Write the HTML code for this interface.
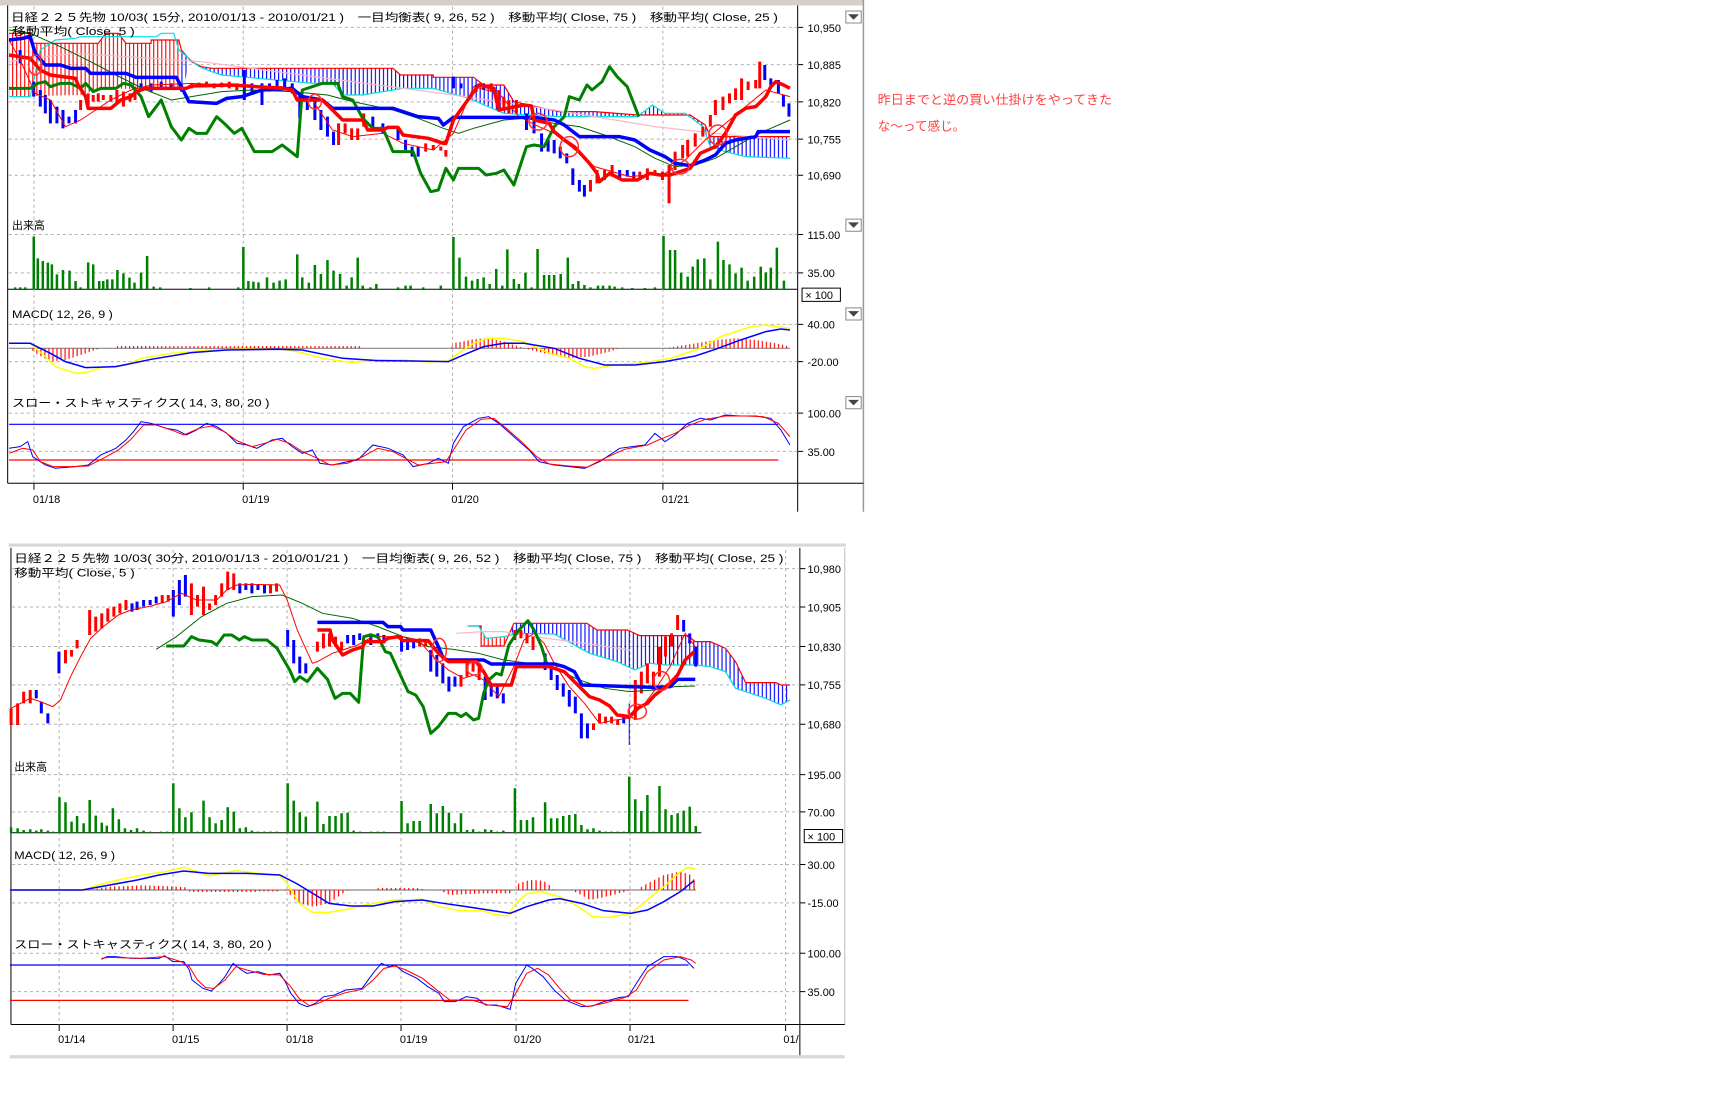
<!DOCTYPE html>
<html><head><meta charset="utf-8"><style>
html,body{margin:0;padding:0;background:#fff;}
svg{display:block;}
text{font-family:"Liberation Sans","Noto Sans CJK JP",sans-serif;font-size:10px;fill:#000;}
.ns{vector-effect:non-scaling-stroke;fill:none;}
</style></head><body>
<svg width="1718" height="1106" viewBox="0 0 1718 1106" xmlns="http://www.w3.org/2000/svg">
<defs>
<pattern id="hr" patternUnits="userSpaceOnUse" width="8" height="4000"><rect x="0" y="0" width="2.2" height="4000" fill="#ff0000"/></pattern>
<pattern id="hb" patternUnits="userSpaceOnUse" width="8" height="4000"><rect x="0" y="0" width="2.2" height="4000" fill="#0000ff"/></pattern>
</defs>
<rect width="1718" height="1106" fill="#fff"/>
<g transform="scale(1.0957)">
<rect x="0" y="0" width="788" height="5" fill="#d4d0c8"/>
<line x1="7" y1="5" x2="7" y2="441" stroke="#000" class="ns"/>
<line x1="728" y1="5" x2="728" y2="467" stroke="#000" class="ns"/>
<line x1="788" y1="0" x2="788" y2="467" stroke="#999" stroke-width="1.5" class="ns"/>
<line x1="7" y1="441" x2="788" y2="441" stroke="#000" class="ns"/>
<line x1="7" y1="264" x2="728" y2="264" stroke="#000" class="ns"/>
<g stroke="#b0b0b0" stroke-dasharray="3,3" class="ns">
<path class="ns" d="M8 25H728M8 59H728M8 93H728M8 127H728M8 160H728M8 214H728M8 249H728M8 296H728M8 330H728M8 377H728M8 412H728"/>
<path class="ns" d="M31 6V441M222 6V441M413 6V441M605 6V441"/>
</g>
<path class="ns" stroke="#000" d="M728 25H733M728 59H733M728 93H733M728 127H733M728 160H733M728 214H733M728 249H733M728 296H733M728 330H733M728 377H733M728 412H733M31 441V447M222 441V447M413 441V447M605 441V447"/>
<g>
<text x="737" y="29">10,950</text><text x="737" y="63">10,885</text><text x="737" y="97">10,820</text><text x="737" y="131">10,755</text><text x="737" y="164">10,690</text>
<text x="737" y="218">115.00</text><text x="737" y="253">35.00</text>
<text x="737" y="300">40.00</text><text x="737" y="334">-20.00</text>
<text x="737" y="381">100.00</text><text x="737" y="416">35.00</text>
<text x="30" y="459">01/18</text><text x="221" y="459">01/19</text><text x="412" y="459">01/20</text><text x="604" y="459">01/21</text>
</g>
<rect x="732" y="263" width="35" height="12" fill="none" stroke="#000" class="ns"/>
<text x="735" y="273">× 100</text>
<g fill="#fff" stroke="#888">
<rect x="772" y="10" width="14" height="11" class="ns" style="fill:#fff"/><rect x="772" y="200" width="14" height="11" class="ns" style="fill:#fff"/><rect x="772" y="281" width="14" height="11" class="ns" style="fill:#fff"/><rect x="772" y="362" width="14" height="11" class="ns" style="fill:#fff"/>
</g>
<path fill="#444" d="M774 13h10l-5 5zM774 203h10l-5 5zM774 284h10l-5 5zM774 365h10l-5 5z"/>

<g transform="scale(0.4598,0.3042)">
<clipPath id="c1r"><rect x="15" y="0" width="345" height="700"/></clipPath>
<clipPath id="c1b"><rect x="360" y="0" width="1220" height="700"/></clipPath>
<path fill="url(#hr)" clip-path="url(#c1r)" d="M18 100L60 100L65 130L195 130L210 100L235 100L250 130L300 130L300 120L355 120L360 150L380 185L400 200L420 205L780 205L795 225L860 225L860 232L940 232L960 255L1000 255L1020 305L1110 335L1180 335L1265 345L1370 345L1400 375L1410 410L1568 410L1568 475L1480 470L1440 455L1410 440L1395 380L1360 340L1320 340L1295 315L1265 350L1110 350L1000 340L930 295L860 265L800 265L780 270L720 285L680 285L660 250L620 250L440 225L420 215L395 200L375 175L365 270L200 265L160 285L18 290Z"/>
<path fill="url(#hb)" clip-path="url(#c1b)" d="M18 100L60 100L65 130L195 130L210 100L235 100L250 130L300 130L300 120L355 120L360 150L380 185L400 200L420 205L780 205L795 225L860 225L860 232L940 232L960 255L1000 255L1020 305L1110 335L1180 335L1265 345L1370 345L1400 375L1410 410L1568 410L1568 475L1480 470L1440 455L1410 440L1395 380L1360 340L1320 340L1295 315L1265 350L1110 350L1000 340L930 295L860 265L800 265L780 270L720 285L680 285L660 250L620 250L440 225L420 215L395 200L375 175L365 270L200 265L160 285L18 290Z"/>
<polyline class="ns" stroke="#ff0000" stroke-width="1.2" points="18,100 60,100 65,130 195,130 210,100 235,100 250,130 300,130 300,120 355,120 360,150 380,185 400,200 420,205 780,205 795,225 860,225 860,232 940,232 960,255 1000,255 1020,305 1110,335 1180,335 1265,345 1370,345 1400,375 1410,410 1568,410"/>
<polyline class="ns" stroke="#00e0e0" stroke-width="1.2" points="18,290 60,290 80,150 110,120 150,115 160,110 310,110 320,100 345,100 355,150 375,175 395,200 420,215 440,225 620,250 660,250 680,285 720,285 780,270 800,265 860,265 930,295 1000,340 1110,350 1180,350 1265,350 1295,315 1320,340 1360,340 1395,380 1410,440 1440,455 1480,470 1568,475"/>
<polyline class="ns" stroke="#f8b8c8" stroke-width="1.2" points="18,185 60,175 150,160 250,170 400,185 500,205 700,245 900,285 1100,330 1300,380 1450,405 1568,420"/>
<path class="ns" stroke="#0000ff" stroke-width="3" d="M40 150V190M67 245V290M80 270V320M90 285V340M100 300V370M113 320V370M125 330V385M137 350V370M150 330V370M280 250V270M300 250V275M320 245V265M340 250V270M360 250V275M485 210V300M500 250V285M520 250V315M535 250V275M550 240V265M565 235V265M580 250V280M595 280V355M610 290V330M625 300V360M637 330V390M650 350V410M662 395V435M740 350V390M760 370V400M790 385V420M805 420V450M818 440V470M830 440V470M900 230V265M915 250V265M945 255V275M960 250V270M1045 340V390M1060 350V400M1075 400V455M1088 420V455M1100 420V460M1112 440V475M1125 460V490M1137 505V555M1150 540V575M1160 555V590M1230 510V535M1245 510V530M1258 515V540M1518 195V240M1530 235V265M1545 240V280M1555 285V320M1566 310V350"/>
<path class="ns" stroke="#ff0000" stroke-width="3" d="M160 300V330M175 280V320M185 285V305M195 280V305M205 285V300M220 285V305M232 270V310M245 275V320M258 280V305M268 260V300M380 250V265M395 248V262M410 245V262M425 250V265M440 248V262M455 245V265M470 250V270M672 370V435M685 370V400M698 385V420M710 385V420M722 340V380M845 430V455M860 435V450M875 440V452M885 450V470M975 250V275M990 270V320M1000 290V330M1010 300V340M1025 300V340M1172 540V575M1185 510V550M1200 510V540M1215 495V530M1270 515V540M1285 505V540M1300 510V525M1315 515V540M1328 495V610M1340 455V510M1355 435V475M1365 420V470M1380 400V440M1395 380V410M1410 345V380M1420 300V345M1435 290V330M1448 280V310M1460 265V300M1472 235V300M1485 245V270M1500 240V265M1508 185V265"/>
<polyline class="ns" stroke="#006400" stroke-width="1" points="18,90 60,100 120,140 180,185 230,225 290,270 340,300 380,290 440,275 500,270 580,275 650,285 700,305 780,330 830,355 880,385 910,400 940,385 1000,360 1040,355 1100,370 1150,380 1200,405 1260,440 1300,475 1340,500 1380,495 1420,475 1460,440 1500,405 1530,385 1568,360"/>
<polyline class="ns" stroke="#ff0000" stroke-width="1" points="18,120 40,180 70,280 100,300 130,380 160,360 190,330 220,300 260,270 300,255 380,250 450,255 560,260 600,290 620,300 660,390 700,410 760,400 800,430 860,450 900,400 940,260 990,280 1030,350 1070,380 1100,400 1150,460 1180,500 1250,530 1320,520 1360,480 1400,420 1440,370 1480,320 1520,270 1568,290"/>
<polyline class="ns" stroke="#008000" stroke-width="3" stroke-linejoin="round" points="18,265 60,265 75,250 90,245 100,260 120,250 140,250 160,265 170,250 185,275 200,265 230,265 245,250 260,255 280,290 295,350 320,300 340,380 360,420 375,385 390,400 410,400 430,350 445,370 465,400 480,385 505,455 540,455 560,435 590,470 600,270 640,250 670,250 680,290 700,300 720,355 740,385 760,385 770,420 780,455 820,455 835,520 855,575 870,570 885,505 900,540 910,505 950,505 965,525 985,520 1000,510 1020,555 1045,440 1060,435 1080,440 1100,380 1120,350 1130,290 1150,300 1165,255 1175,270 1195,245 1210,200 1225,230 1245,260 1268,350"/>
<polyline class="ns" stroke="#0000ff" stroke-width="3.5" stroke-linejoin="round" points="18,120 45,115 60,110 70,160 90,195 120,195 140,205 170,205 180,220 250,220 270,232 350,232 360,260 375,305 430,310 450,295 480,290 520,270 580,265 600,290 640,300 660,325 780,325 790,330 830,350 870,355 880,375 900,352 1000,352 1060,352 1100,360 1120,375 1150,410 1230,410 1260,420 1290,450 1320,470 1340,490 1370,497 1400,480 1420,465 1440,430 1460,420 1500,410 1505,395 1568,395"/>
<polyline class="ns" stroke="#ff0000" stroke-width="3.5" stroke-linejoin="round" points="18,165 60,175 80,210 100,225 150,235 155,255 170,290 175,325 220,325 240,300 260,290 270,275 290,265 320,265 350,265 370,265 380,258 460,255 560,265 580,270 590,300 640,300 680,360 720,360 730,390 760,390 770,382 790,382 800,405 850,415 880,430 885,430 900,360 950,255 980,265 990,330 1040,315 1055,318 1060,360 1090,370 1100,395 1120,420 1140,440 1170,490 1185,520 1190,545 1210,520 1235,540 1265,540 1290,520 1310,525 1330,525 1340,520 1370,505 1390,460 1420,440 1440,400 1460,345 1480,325 1500,320 1520,290 1530,260 1540,245 1555,255 1568,265"/>
<g class="ns" stroke="#ff3030" stroke-width="1.5">
<ellipse class="ns" cx="70" cy="195" rx="13" ry="30"/><ellipse class="ns" cx="625" cy="305" rx="13" ry="22"/><ellipse class="ns" cx="1068" cy="365" rx="18" ry="25"/><ellipse class="ns" cx="1130" cy="440" rx="18" ry="30"/><ellipse class="ns" cx="1350" cy="500" rx="18" ry="22"/><ellipse class="ns" cx="1425" cy="405" rx="18" ry="30"/>
</g>
<path class="ns" stroke="#008000" stroke-width="2.5" d="M30 867V862M40 867V862M50 867V862M67 867V710M75 867V775M85 867V783M95 867V788M103 867V793M113 867V823M125 867V810M138 867V812M150 867V843M160 867V862M175 867V787M185 867V793M197 867V843M205 867V843M213 867V838M223 867V838M233 867V810M245 867V820M257 867V833M267 867V848M280 867V818M292 867V768M305 867V860M318 867V862M378 867V864M415 867V862M473 867V862M483 867V741M493 867V843M503 867V845M513 867V847M530 867V832M543 867V848M555 867V842M567 867V838M590 867V763M600 867V832M613 867V848M625 867V795M637 867V822M650 867V780M662 867V812M675 867V822M688 867V857M698 867V832M710 867V773M720 867V857M735 867V862M747 867V852M790 867V862M805 867V857M815 867V857M840 867V862M875 867V857M900 867V711M912 867V773M925 867V830M937 867V842M948 867V837M960 867V832M972 867V852M985 867V807M997 867V857M1007 867V748M1020 867V837M1030 867V852M1043 867V818M1055 867V862M1067 867V747M1080 867V825M1090 867V825M1100 867V825M1113 867V822M1127 867V773M1137 867V852M1148 867V843M1160 867V855M1172 867V862M1187 867V857M1197 867V857M1210 867V857M1220 867V860M1235 867V862M1255 867V864M1280 867V864M1300 867V862M1317 867V708M1330 867V750M1340 867V750M1352 867V818M1365 867V830M1375 867V800M1385 867V778M1398 867V775M1410 867V838M1425 867V725M1436 867V780M1448 867V793M1460 867V820M1472 867V803M1484 867V842M1497 867V830M1510 867V800M1520 867V817M1530 867V803M1542 867V743M1556 867V842"/>
<line class="ns" x1="18" y1="1045" x2="1568" y2="1045" stroke="#888" stroke-width="1.2"/>
<path fill="url(#hr)" d="M60 1045L70 1060L100 1085L130 1080L160 1065L190 1050L200 1045ZM230 1045L720 1045L720 1038L230 1038ZM895 1045L900 1030L940 1018L970 1015L1000 1025L1030 1040L1040 1045ZM1040 1045L1080 1060L1130 1075L1170 1070L1210 1055L1230 1045ZM1320 1045L1360 1035L1420 1020L1460 1015L1500 1020L1540 1030L1568 1040L1568 1045Z"/>
<polyline class="ns" stroke="#ffff00" stroke-width="1.5" points="18,1030 60,1030 90,1070 110,1100 150,1120 170,1118 200,1103 250,1095 280,1075 340,1060 420,1050 480,1048 560,1048 590,1055 640,1075 700,1088 750,1080 800,1080 850,1086 890,1083 910,1060 940,1030 970,1015 1000,1015 1040,1025 1090,1060 1130,1075 1160,1100 1180,1105 1220,1095 1280,1088 1330,1075 1390,1045 1430,1010 1490,980 1520,975 1568,985"/>
<polyline class="ns" stroke="#0000ff" stroke-width="1.5" points="18,1030 60,1030 100,1060 130,1085 170,1103 230,1100 300,1078 380,1058 450,1050 550,1048 600,1050 680,1075 750,1082 820,1083 890,1085 920,1065 960,1040 1000,1030 1040,1030 1100,1045 1150,1075 1200,1095 1260,1095 1320,1085 1380,1068 1420,1048 1470,1020 1520,995 1550,987 1568,990"/>
<line class="ns" x1="18" y1="1273" x2="1545" y2="1273" stroke="#0000ff" stroke-width="1.2"/>
<line class="ns" x1="18" y1="1380" x2="1545" y2="1380" stroke="#ff0000" stroke-width="1.2"/>
<polyline class="ns" stroke="#0000ff" stroke-width="1" points="18,1345 40,1340 55,1325 65,1370 90,1395 110,1405 150,1400 175,1395 200,1365 230,1345 250,1320 265,1295 280,1265 300,1270 330,1285 350,1290 370,1305 390,1290 410,1270 430,1280 450,1300 470,1330 490,1335 510,1345 540,1320 560,1315 580,1340 600,1360 620,1350 635,1390 660,1395 690,1385 710,1380 740,1335 770,1345 800,1365 820,1400 850,1390 870,1375 890,1390 900,1330 920,1280 950,1255 970,1250 990,1270 1020,1310 1050,1350 1070,1385 1100,1395 1130,1400 1160,1405 1190,1385 1230,1345 1280,1335 1300,1300 1320,1325 1340,1305 1365,1270 1390,1255 1410,1260 1440,1245 1470,1248 1500,1248 1530,1255 1550,1290 1568,1335"/>
<polyline class="ns" stroke="#ff0000" stroke-width="1" points="18,1360 45,1345 65,1350 80,1385 105,1400 140,1400 175,1398 205,1375 235,1350 260,1318 285,1275 310,1275 340,1290 365,1305 395,1285 420,1278 445,1295 470,1322 500,1340 525,1330 550,1318 575,1330 600,1355 630,1375 655,1395 690,1390 720,1370 750,1345 780,1355 805,1375 830,1395 860,1390 885,1385 900,1350 925,1290 955,1258 980,1255 1005,1285 1035,1325 1065,1370 1090,1392 1130,1398 1165,1402 1200,1375 1240,1348 1285,1335 1310,1318 1340,1300 1370,1275 1400,1258 1440,1248 1480,1248 1515,1250 1545,1270 1568,1310"/>
</g>
<text x="10" y="19" textLength="700" lengthAdjust="spacingAndGlyphs">日経２２５先物 10/03( 15分, 2010/01/13 - 2010/01/21 )　一目均衡表( 9, 26, 52 )　移動平均( Close, 75 )　移動平均( Close, 25 )</text>
<text x="11" y="32" textLength="112" lengthAdjust="spacingAndGlyphs">移動平均( Close, 5 )</text>
<text x="11" y="209">出来高</text>
<text x="11" y="290" textLength="92" lengthAdjust="spacingAndGlyphs">MACD( 12, 26, 9 )</text>
<text x="11" y="371" textLength="235" lengthAdjust="spacingAndGlyphs">スロー・ストキャスティクス( 14, 3, 80, 20 )</text>

<text x="801" y="95" style="fill:#ff4040;font-size:11.5px" textLength="214" lengthAdjust="spacingAndGlyphs">昨日までと逆の買い仕掛けをやってきた</text>
<text x="801" y="119" style="fill:#ff4040;font-size:11.5px" textLength="80" lengthAdjust="spacingAndGlyphs">な〜って感じ。</text>

<rect x="8" y="496" width="764" height="3" fill="#d8d8d8"/>
<line x1="10" y1="500" x2="10" y2="935" stroke="#000" class="ns"/>
<line x1="730" y1="500" x2="730" y2="965" stroke="#000" class="ns"/>
<line x1="771" y1="500" x2="771" y2="935" stroke="#bbb" class="ns"/>
<line x1="10" y1="935" x2="771" y2="935" stroke="#000" class="ns"/>
<line x1="10" y1="760" x2="640" y2="760" stroke="#000" class="ns"/>
<rect x="9" y="963" width="762" height="3" fill="#d8d8d8"/>
<g stroke="#b0b0b0" stroke-dasharray="3,3">
<path class="ns" d="M11 519H730M11 554H730M11 590H730M11 625H730M11 661H730M11 707H730M11 741H730M11 789H730M11 824H730M11 870H730M11 905H730"/>
<path class="ns" d="M54 502V935M158 502V935M262 502V935M366 502V935M471 502V935M575 502V935M717 502V935"/>
</g>
<path class="ns" stroke="#000" d="M730 519H735M730 554H735M730 590H735M730 625H735M730 661H735M730 707H735M730 741H735M730 789H735M730 824H735M730 870H735M730 905H735M54 935V941M158 935V941M262 935V941M366 935V941M471 935V941M575 935V941M717 935V941"/>
<text x="737" y="523">10,980</text><text x="737" y="558">10,905</text><text x="737" y="594">10,830</text><text x="737" y="629">10,755</text><text x="737" y="665">10,680</text>
<text x="737" y="711">195.00</text><text x="737" y="745">70.00</text>
<text x="737" y="793">30.00</text><text x="737" y="828">-15.00</text>
<text x="737" y="874">100.00</text><text x="737" y="909">35.00</text>
<rect x="734" y="757" width="35" height="12" fill="none" stroke="#000" class="ns"/>
<text x="737" y="767">× 100</text>
<text x="53" y="952">01/14</text><text x="157" y="952">01/15</text><text x="261" y="952">01/18</text><text x="365" y="952">01/19</text><text x="469" y="952">01/20</text><text x="573" y="952">01/21</text><text x="715" y="952">01/</text>
<text x="13" y="513" textLength="702" lengthAdjust="spacingAndGlyphs">日経２２５先物 10/03( 30分, 2010/01/13 - 2010/01/21 )　一目均衡表( 9, 26, 52 )　移動平均( Close, 75 )　移動平均( Close, 25 )</text>
<text x="13" y="526" textLength="110" lengthAdjust="spacingAndGlyphs">移動平均( Close, 5 )</text>
<text x="13" y="703">出来高</text>
<text x="13" y="784" textLength="92" lengthAdjust="spacingAndGlyphs">MACD( 12, 26, 9 )</text>
<text x="13" y="865" textLength="235" lengthAdjust="spacingAndGlyphs">スロー・ストキャスティクス( 14, 3, 80, 20 )</text>

<g transform="translate(0,447.2) scale(0.4598,0.3042)">
<clipPath id="c2r"><rect x="925" y="300" width="90" height="800"/></clipPath>
<clipPath id="c2b"><rect x="1015" y="300" width="560" height="800"/></clipPath>
<path fill="url(#hr)" clip-path="url(#c2r)" d="M928 408L955 408L955 468L1000 468L1020 400L1165 400L1185 420L1245 420L1270 437L1365 437L1380 455L1410 455L1440 475L1460 515L1480 578L1540 578L1550 585L1568 585L1568 630L1550 645L1520 625L1490 610L1460 595L1440 545L1410 530L1380 525L1320 525L1290 520L1260 540L1225 515L1170 490L1100 432L1030 430L1000 440L965 445L950 408Z"/>
<path fill="url(#hb)" clip-path="url(#c2b)" d="M928 408L955 408L955 468L1000 468L1020 400L1165 400L1185 420L1245 420L1270 437L1365 437L1380 455L1410 455L1440 475L1460 515L1480 578L1540 578L1550 585L1568 585L1568 630L1550 645L1520 625L1490 610L1460 595L1440 545L1410 530L1380 525L1320 525L1290 520L1260 540L1225 515L1170 490L1100 432L1030 430L1000 440L965 445L950 408Z"/>
<polyline class="ns" stroke="#ff0000" stroke-width="1.2" points="928,408 955,408 955,468 1000,468 1020,400 1165,400 1185,420 1245,420 1270,437 1365,437 1380,455 1410,455 1440,475 1460,515 1480,578 1540,578 1550,585 1568,585"/>
<polyline class="ns" stroke="#00e0e0" stroke-width="1.2" points="928,408 950,408 965,445 1000,440 1030,430 1100,432 1170,490 1225,515 1260,540 1290,520 1320,525 1380,525 1410,530 1440,545 1460,595 1490,610 1520,625 1550,645 1568,630"/>
<polyline class="ns" stroke="#f8b8c8" stroke-width="1.2" points="905,430 960,425 1000,425 1060,440 1160,460 1250,480"/>
<path class="ns" stroke="#ff0000" stroke-width="3" d="M22 655V705M35 640V705M47 605V640M60 600V640M130 480V520M142 480V500M153 450V475M178 360V435M190 380V425M202 370V415M214 355V395M226 350V380M238 340V370M250 330V360M322 315V340M334 315V335M380 280V375M392 315V350M404 290V375M416 340V360M428 315V345M440 280V320M452 245V300M464 250V300M537 283V310M549 280V305M630 455V485M642 430V475M654 430V470M666 440V470M678 455V480M833 445V470M845 450V470M915 555V590M927 520V560M939 520V545M951 530V570M1022 420V450M1034 420V445M1046 430V460M1058 440V480M1178 700V720M1190 670V700M1202 680V700M1214 680V700M1226 690V705M1261 570V690M1273 545V610M1285 520V580M1297 545V600M1309 470V560M1321 440V500M1333 430V470M1345 375V420"/>
<path class="ns" stroke="#0000ff" stroke-width="3" d="M72 600V625M82 635V670M95 670V700M117 485V550M262 340V365M272 335V360M285 330V350M298 330V345M310 320V340M344 300V380M356 270V345M368 255V320M476 280V310M488 280V300M500 280V310M512 285V300M525 285V310M571 420V470M583 450V520M595 500V550M607 520V550M690 435V460M702 435V465M714 430V450M736 430V465M750 430V445M762 435V460M797 440V485M809 445V480M821 445V475M855 480V545M867 495V560M879 520V580M891 560V605M903 560V590M963 560V630M975 580V620M987 590V625M999 610V640M1082 490V540M1094 530V570M1106 555V600M1118 580V620M1130 600V650M1142 620V670M1154 670V745M1166 700V745M1238 680V700M1357 390V425M1369 430V460M1381 470V530"/>
<path class="ns" stroke="#0000ff" stroke-width="1" d="M1249 640V765"/>
<polyline class="ns" stroke="#006400" stroke-width="1" points="310,478 350,440 400,380 450,340 500,320 560,315 600,340 640,370 700,385 750,410 800,440 850,470 900,478 950,490 1000,510 1050,520 1100,535 1150,570 1200,595 1250,605 1300,600 1340,590 1380,588"/>
<polyline class="ns" stroke="#ff0000" stroke-width="1" points="22,655 60,625 80,635 105,650 120,630 140,560 160,500 180,445 205,410 235,375 260,360 300,348 330,335 360,310 390,330 430,330 450,300 470,285 500,283 555,285 570,330 590,420 620,520 630,515 660,490 680,480 710,465 740,440 760,440 800,440 830,450 860,500 890,540 920,565 940,555 960,570 990,620 1020,530 1040,450 1060,430 1080,460 1100,520 1130,590 1160,640 1190,700 1220,690 1250,685 1280,640 1300,600 1330,530 1360,430 1380,470"/>
<polyline class="ns" stroke="#008000" stroke-width="3" stroke-linejoin="round" points="330,468 365,468 380,440 395,450 420,455 430,465 445,435 460,435 475,450 485,440 500,450 530,450 550,475 575,540 585,575 595,560 610,575 630,535 650,568 665,625 680,610 695,610 712,637 722,440 735,435 750,440 765,485 775,490 790,540 810,605 825,615 840,650 855,730 870,710 890,670 905,670 915,680 925,670 940,690 950,685 960,610 970,570 985,550 995,555 1010,465 1030,420 1048,392 1060,420 1075,470 1085,520"/>
<polyline class="ns" stroke="#0000ff" stroke-width="3.5" stroke-linejoin="round" points="630,397 760,397 770,410 795,410 800,420 855,420 870,470 880,505 890,510 960,510 975,522 1100,522 1120,530 1140,545 1155,585 1250,590 1300,592 1330,590 1345,568 1380,568"/>
<polyline class="ns" stroke="#ff0000" stroke-width="3.5" stroke-linejoin="round" points="630,420 655,420 660,450 680,495 700,480 720,470 725,455 760,455 770,445 790,440 800,452 850,452 870,490 890,515 945,515 960,545 975,585 1015,585 1025,530 1090,530 1120,545 1150,590 1170,620 1190,630 1210,648 1225,675 1250,680 1265,655 1285,640 1300,615 1330,580 1345,555 1360,510 1378,485"/>
<g stroke="#ff3030" stroke-width="1.5">
<ellipse class="ns" cx="872" cy="480" rx="14" ry="35"/><ellipse class="ns" cx="942" cy="535" rx="15" ry="20"/><ellipse class="ns" cx="1265" cy="665" rx="18" ry="22"/><ellipse class="ns" cx="1313" cy="573" rx="16" ry="28"/>
</g>
<path class="ns" stroke="#008000" stroke-width="2.5" d="M22 1030V1012M35 1030V1015M47 1030V1020M60 1030V1018M72 1030V1022M82 1030V1018M95 1030V1022M106 1030V1025M118 1030V922M130 1030V937M142 1030V995M153 1030V978M166 1030V1000M178 1030V930M190 1030V977M202 1030V998M212 1030V1007M224 1030V955M236 1030V988M248 1030V1015M260 1030V1020M272 1030V1015M285 1030V1022M298 1030V1025M320 1030V1025M332 1030V1025M344 1030V880M356 1030V955M368 1030V982M380 1030V967M392 1030V1025M404 1030V932M416 1030V982M428 1030V1000M440 1030V990M452 1030V952M464 1030V965M476 1030V1015M488 1030V1012M500 1030V1022M512 1030V1025M525 1030V1025M537 1030V1025M549 1030V1025M571 1030V880M583 1030V932M595 1030V967M607 1030V980M630 1030V935M642 1030V1002M654 1030V978M666 1030V978M678 1030V970M690 1030V968M702 1030V1022M715 1030V1025M737 1030V1025M750 1030V1025M762 1030V1025M797 1030V933M809 1030V1000M821 1030V993M833 1030V993M855 1030V942M867 1030V970M879 1030V948M891 1030V968M903 1030V1000M915 1030V970M927 1030V1020M939 1030V1018M951 1030V1025M963 1030V1018M975 1030V1020M987 1030V1025M999 1030V1022M1022 1030V895M1034 1030V990M1046 1030V990M1058 1030V982M1082 1030V937M1094 1030V985M1106 1030V985M1118 1030V978M1130 1030V975M1142 1030V972M1154 1030V1005M1166 1030V1018M1178 1030V1015M1190 1030V1022M1202 1030V1025M1214 1030V1025M1226 1030V1025M1238 1030V1025M1249 1030V860M1261 1030V928M1273 1030V963M1285 1030V915M1297 1030V1025M1309 1030V888M1321 1030V958M1333 1030V975M1345 1030V970M1357 1030V962M1369 1030V950M1381 1030V1008"/>
</g>

<g transform="translate(0,784.9) scale(0.5007,0.3042)">
<line class="ns" x1="18" y1="90" x2="1268" y2="90" stroke="#888" stroke-width="1.2"/>
<path fill="url(#hr)" d="M160 90L200 80L260 76L300 78L340 82L345 90ZM345 90L470 90L470 96L345 96ZM470 90L510 90L510 94L470 94ZM520 90L545 130L570 140L600 130L625 100L635 90ZM680 90L690 84L760 84L780 90ZM800 90L820 105L880 100L930 100L935 90ZM940 90L945 70L965 60L990 62L1005 80L1010 90ZM1040 90L1060 105L1075 120L1100 112L1140 95L1150 90ZM1160 90L1180 70L1210 45L1240 35L1260 45L1268 65L1268 90Z"/>
<polyline class="ns" stroke="#ffff00" stroke-width="1.5" points="18,90 150,90 180,75 220,58 260,45 300,35 335,22 350,30 380,48 430,32 470,40 510,45 525,75 545,130 570,157 600,157 640,145 680,130 720,120 770,118 800,140 840,152 880,152 900,163 925,168 940,130 960,102 985,95 1020,110 1050,135 1080,170 1110,172 1150,160 1180,120 1210,80 1240,35 1255,22 1268,28"/>
<polyline class="ns" stroke="#0000ff" stroke-width="1.5" points="18,90 150,90 200,75 250,60 290,45 335,33 380,40 450,40 510,45 540,70 570,100 600,130 640,138 680,138 720,125 770,120 800,128 850,140 890,150 930,160 960,140 1000,120 1020,116 1060,130 1100,152 1150,160 1180,150 1210,125 1240,95 1265,62"/>
<line class="ns" x1="18" y1="315" x2="1255" y2="315" stroke="#0000ff" stroke-width="1.2"/>
<line class="ns" x1="18" y1="421" x2="1255" y2="421" stroke="#ff0000" stroke-width="1.2"/>
<polyline class="ns" stroke="#0000ff" stroke-width="1" points="185,298 195,290 210,290 240,295 290,295 300,287 315,305 335,305 345,330 350,360 370,385 385,393 400,370 410,350 425,310 440,330 450,340 470,335 490,345 510,340 520,365 530,400 545,430 560,440 575,430 590,410 610,405 630,390 660,385 680,340 695,310 710,320 720,315 735,335 760,355 780,380 800,400 810,425 830,425 850,410 870,415 885,435 905,435 930,448 940,370 960,315 970,325 990,350 1010,390 1030,420 1060,440 1080,438 1100,425 1130,412 1145,410 1160,370 1180,320 1210,290 1235,290 1250,300 1265,325"/>
<polyline class="ns" stroke="#ff0000" stroke-width="1" points="185,295 200,292 255,295 300,290 330,305 345,320 360,360 375,383 390,385 410,360 430,320 450,330 480,343 510,345 530,380 545,415 565,438 580,430 600,415 630,398 660,388 680,360 700,325 720,318 740,330 770,355 800,395 820,420 860,420 890,435 925,440 940,400 960,340 980,325 1000,345 1020,385 1040,420 1070,440 1100,430 1140,412 1160,390 1180,335 1210,300 1240,290 1260,300 1268,310"/>
</g>
</g>
</svg>
</body></html>
